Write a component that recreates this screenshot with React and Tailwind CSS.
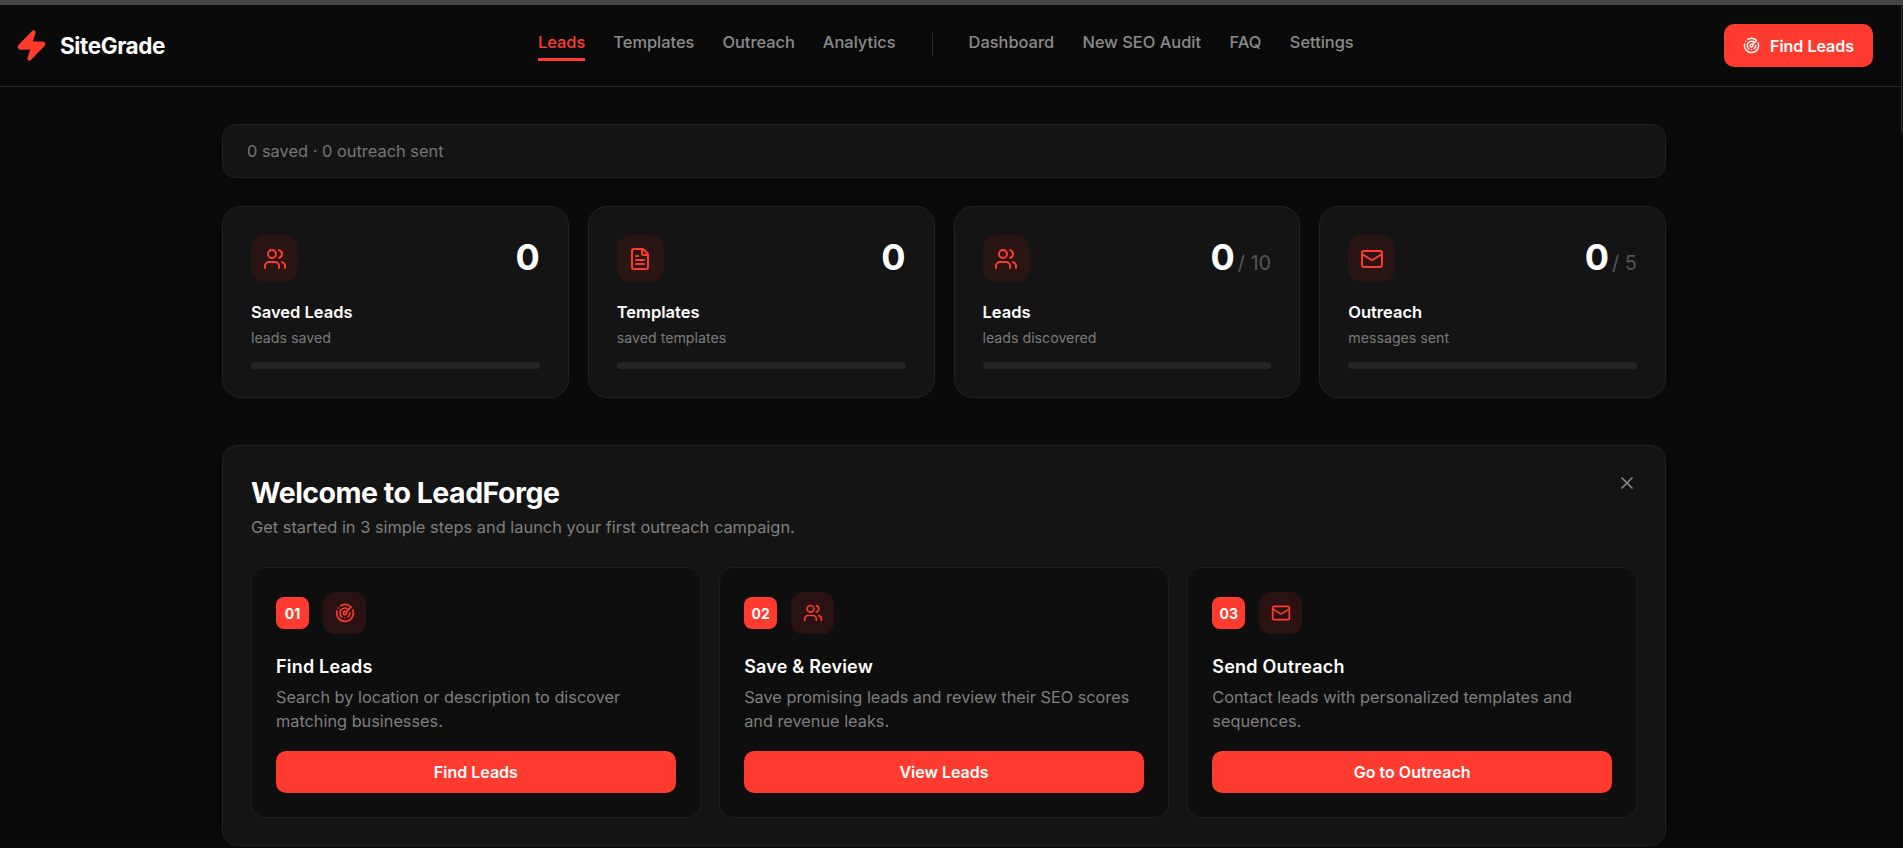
import { FileText, Mail, Radar, Users, X, Zap } from 'lucide-react';

const navMain = ['Leads', 'Templates', 'Outreach', 'Analytics'];
const navMore = ['Dashboard', 'New SEO Audit', 'FAQ', 'Settings'];

const stats = [
    { icon: Users, title: 'Saved Leads', sub: 'leads saved', value: '0' },
    { icon: FileText, title: 'Templates', sub: 'saved templates', value: '0' },
    { icon: Users, title: 'Leads', sub: 'leads discovered', value: '0', limit: '/ 10' },
    { icon: Mail, title: 'Outreach', sub: 'messages sent', value: '0', limit: '/ 5' },
];

const steps = [
    {
        num: '01',
        icon: Radar,
        title: 'Find Leads',
        desc: 'Search by location or description to discover matching businesses.',
        action: 'Find Leads',
    },
    {
        num: '02',
        icon: Users,
        title: 'Save & Review',
        desc: 'Save promising leads and review their SEO scores and revenue leaks.',
        action: 'View Leads',
    },
    {
        num: '03',
        icon: Mail,
        title: 'Send Outreach',
        desc: 'Contact leads with personalized templates and sequences.',
        action: 'Go to Outreach',
    },
];

function NavLink({ label, active }) {
    return (
        <a
            className={
                active
                    ? 'h-[31px] border-b-[3px] border-[#ff3b30] text-[16.4px] leading-[24px] font-medium text-[#ff3b30]'
                    : 'h-[31px] text-[16.4px] leading-[24px] font-medium text-[#8a8a8a]'
            }
        >
            {label}
        </a>
    );
}

function StatCard({ icon: Icon, title, sub, value, limit }) {
    return (
        <div className="h-[192px] rounded-[19px] border border-[#222222] bg-[#141414] p-[28px]">
            <div className="flex items-start justify-between">
                <div className="flex h-[47px] w-[47px] items-center justify-center rounded-[14px] bg-[#2a1515]">
                    <Icon size={24} className="text-[#ff3b30]" />
                </div>
                <div className="flex items-baseline gap-[3px]">
                    <span className="text-[36px] leading-[44px] font-bold text-white">{value}</span>
                    {limit && <span className="text-[20px] text-[#555555]">{limit}</span>}
                </div>
            </div>
            <div className="mt-[18px] text-[16.5px] leading-[24px] font-semibold text-white">{title}</div>
            <div className="mt-[3px] text-[14.2px] leading-[22px] text-[#7a7a7a]">{sub}</div>
            <div className="mt-[13px] h-[7px] rounded-full bg-[#242424]" />
        </div>
    );
}

function StepCard({ num, icon: Icon, title, desc, action }) {
    return (
        <div className="h-[251px] rounded-[14px] border border-[#1f1f1f] bg-[#0e0e0e] px-[24px] pt-[24px]">
            <div className="flex items-center gap-[14px]">
                <div className="flex h-[32px] w-[33px] items-center justify-center rounded-[8px] bg-[#ff3b30] text-[14px] font-bold text-white">
                    {num}
                </div>
                <div className="flex h-[42px] w-[43px] items-center justify-center rounded-[12px] bg-[#2a1212]">
                    <Icon size={20} className="text-[#ff3b30]" />
                </div>
            </div>
            <div className="mt-[21px] text-[18px] leading-[24px] font-semibold tracking-[0.2px] text-white">{title}</div>
            <p className="mt-[6px] text-[16.3px] leading-[24px] text-[#7f7f7f]">{desc}</p>
            <button className="mt-[18px] h-[42px] w-full rounded-[10px] bg-[#ff3b30] text-[16px] font-semibold text-white">
                {action}
            </button>
        </div>
    );
}

export default function App() {
    return (
        <div className="relative h-[848px] overflow-hidden bg-[#0a0a0a] font-['Inter',sans-serif]">
            <div className="h-[5px] bg-[#444444]" />
            {/* thin scrollbar edge on the right of the capture */}
            <div className="absolute top-[5px] right-[1px] h-[127px] w-px bg-[#333333]" />
            <header className="relative flex h-[82px] items-center justify-between border-b border-[#262626] pr-[30px] pl-[15px]">
                <div className="flex items-center gap-[12px]">
                    <Zap size={33} fill="#ff3b30" className="text-[#ff3b30]" />
                    <span className="text-[22.5px] font-bold tracking-[-0.4px] text-white">SiteGrade</span>
                </div>
                <nav className="absolute top-[25px] left-[538px] flex items-start gap-[28px]">
                    {navMain.map((item) => (
                        <NavLink key={item} label={item} active={item === 'Leads'} />
                    ))}
                    <div className="mx-[8px] mt-[3px] h-[23px] w-px bg-[#2a2a2a]" />
                    <div className="flex items-start gap-[28.5px]">
                        {navMore.map((item) => (
                            <NavLink key={item} label={item} />
                        ))}
                    </div>
                </nav>
                <button className="flex h-[43px] w-[149px] items-center justify-center gap-[10px] rounded-[10px] bg-[#ff3b30] text-[16px] font-semibold text-white">
                    <Radar size={17} />
                    Find Leads
                </button>
            </header>
            <main className="ml-[222px] w-[1444px] pt-[37px]">
                <div className="flex h-[54px] items-center rounded-[14px] border border-[#222222] bg-[#141414] px-[24px] text-[16.4px] text-[#767676]">
                    0 saved · 0 outreach sent
                </div>
                <div className="mt-[28px] grid grid-cols-4 gap-[19px]">
                    {stats.map((s) => (
                        <StatCard key={s.title} {...s} />
                    ))}
                </div>
                <section className="relative mt-[47px] h-[401px] rounded-[15px] border border-[#222222] bg-[#141414] px-[28px] pt-[27px]">
                    <X size={20} className="absolute top-[27px] right-[28px] text-[#8a8a8a]" />
                    <h1 className="text-[28.5px] leading-[40px] font-bold tracking-[-0.5px] text-white">Welcome to LeadForge</h1>
                    <p className="mt-[1px] text-[16.4px] leading-[26px] text-[#7f7f7f]">
                        Get started in 3 simple steps and launch your first outreach campaign.
                    </p>
                    <div className="mt-[27px] grid grid-cols-3 gap-[18.5px]">
                        {steps.map((s) => (
                            <StepCard key={s.num} {...s} />
                        ))}
                    </div>
                </section>
            </main>
        </div>
    );
}
